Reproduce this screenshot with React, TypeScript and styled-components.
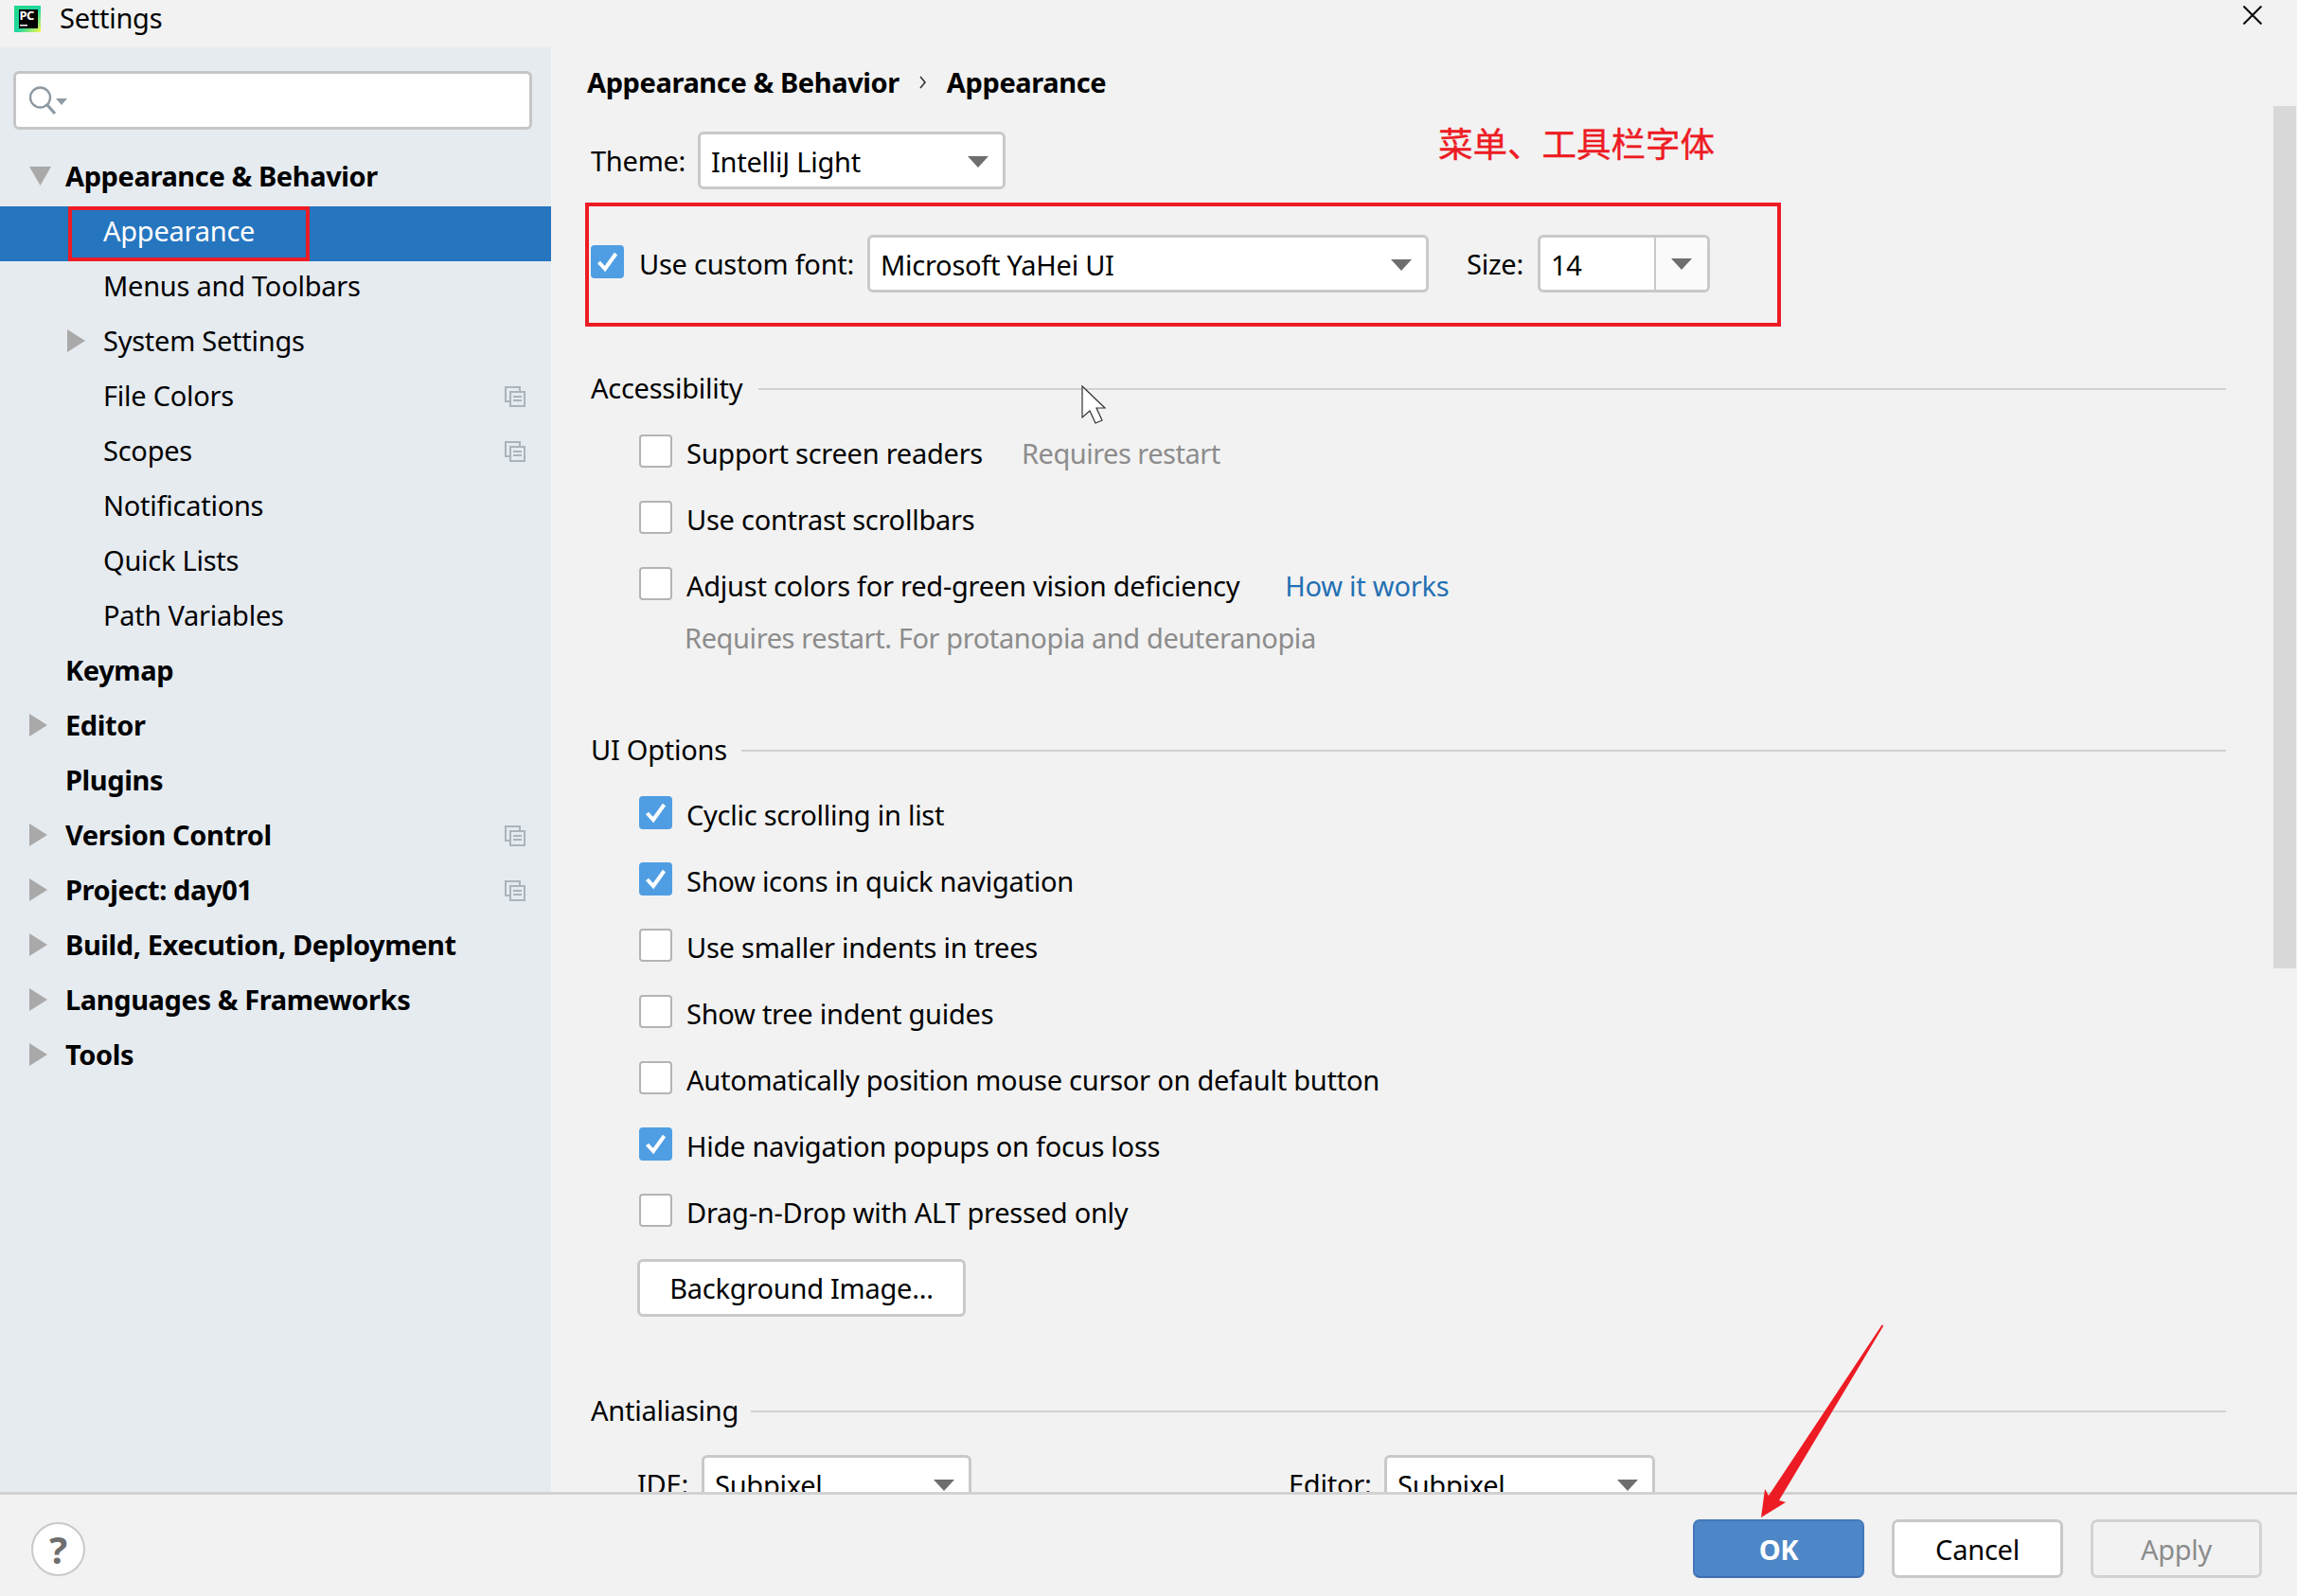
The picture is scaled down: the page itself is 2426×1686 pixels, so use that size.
import styled, { createGlobalStyle } from 'styled-components'

const GlobalStyle = createGlobalStyle`
    html, body {
        margin: 0;
        padding: 0;
        background: #f2f2f2;
    }
    * {
        box-sizing: border-box;
    }
`;

const FONT = `"Noto Sans", "Noto Sans CJK SC", sans-serif`;

const Window = styled.div`
    position: relative;
    width: 2426px;
    height: 1686px;
    display: flex;
    flex-direction: column;
    overflow: hidden;
    background: #f2f2f2;
    color: #000;
    font-family: ${FONT};
    font-size: 29px;
    letter-spacing: -0.25px;
`;

const TitleBar = styled.div`
    height: 50px;
    flex: none;
    display: flex;
    align-items: flex-start;
    padding: 6px 37px 0 15px;
    gap: 20px;
`;

const TitleText = styled.span`
    line-height: 26px;
    font-size: 29px;
    flex: 1;
`;

const Main = styled.div`
    flex: 1;
    min-height: 0;
    display: flex;
`;

const Sidebar = styled.nav`
    width: 582px;
    flex: none;
    background: #e6ebf0;
    padding-top: 25px;
`;

const SearchBox = styled.div`
    width: 548px;
    height: 62px;
    margin-left: 14px;
    margin-bottom: 23px;
    background: #fff;
    border: 3px solid #c6c6c6;
    border-radius: 6px;
    display: flex;
    align-items: center;
    padding-left: 14px;
`;

const NavRow = styled.div<{ $selected?: boolean }>`
    position: relative;
    height: 58px;
    display: flex;
    align-items: center;
    padding-bottom: 7px;
    background: ${p => (p.$selected ? '#2675bf' : 'transparent')};
    color: ${p => (p.$selected ? '#fff' : '#000')};
`;

const ArrowSlot = styled.span<{ $left: number }>`
    position: absolute;
    left: ${p => p.$left}px;
    display: flex;
    top: 0;
    bottom: 6px;
    align-items: center;
`;

const NavLabel = styled.span<{ $sub?: boolean }>`
    margin-left: ${p => (p.$sub ? 109 : 69)}px;
    font-weight: ${p => (p.$sub ? 400 : 700)};
    letter-spacing: ${p => (p.$sub ? -0.25 : -0.4)}px;
`;

const CopyIcon = styled.svg`
    position: absolute;
    left: 533px;
    top: 16px;
`;

const HighlightBox = styled.span`
    position: absolute;
    left: 72px;
    top: 0;
    width: 255px;
    height: 58px;
    border: 4px solid #ed1c24;
`;

const Content = styled.div`
    flex: 1;
    min-width: 0;
    overflow: hidden;
    padding-left: 42px;
`;

const Breadcrumb = styled.div`
    height: 76px;
    margin-left: -4px;
    padding-bottom: 3px;
    display: flex;
    align-items: center;
    font-weight: 700;
    gap: 21px;
    letter-spacing: -0.4px;
`;

const ThemeRow = styled.div`
    height: 61px;
    margin-top: 13px;
    display: flex;
    align-items: center;
`;

const FieldLabel = styled.span<{ $width: number; $left?: number }>`
    width: ${p => p.$width}px;
    flex: none;
    margin-left: ${p => p.$left ?? 0}px;
    white-space: nowrap;
`;

const Combo = styled.div<{ $width: number }>`
    width: ${p => p.$width}px;
    height: 61px;
    flex: none;
    background: #fff;
    border: 3px solid #c9c9c9;
    border-radius: 6px;
    display: flex;
    align-items: center;
    justify-content: space-between;
    padding: 2px 15px 0 11px;
`;

const Caret = styled.span`
    width: 0;
    height: 0;
    border-left: 11px solid transparent;
    border-right: 11px solid transparent;
    border-top: 12px solid #6e6e6e;
`;

const Annotation = styled.span`
    margin-left: 457px;
    margin-top: -36px;
    font-size: 36.5px;
    line-height: 36px;
    letter-spacing: 0;
    -webkit-text-stroke: 0.4px #ed1c24;
    color: #ed1c24;
    white-space: nowrap;
`;

const RedBox = styled.div`
    width: 1263px;
    height: 131px;
    margin: 14px 0 0 -6px;
    padding: 0 0 2px 2px;
    border: 4px solid #ed1c24;
    display: flex;
    align-items: center;
`;

const SplitCombo = styled.div`
    width: 182px;
    height: 61px;
    flex: none;
    background: #fff;
    border: 3px solid #c9c9c9;
    border-radius: 6px;
    display: flex;
    align-items: center;
`;

const SplitValue = styled.span`
    width: 120px;
    padding: 2px 0 0 11px;
`;

const SplitButton = styled.span`
    flex: 1;
    align-self: stretch;
    background: #fafafa;
    border-left: 2px solid #c9c9c9;
    border-radius: 0 4px 4px 0;
    display: flex;
    align-items: center;
    justify-content: center;
`;

const SectionTitle = styled.div<{ $top: number; $labelWidth: number }>`
    height: 50px;
    width: 1727px;
    margin-top: ${p => p.$top}px;
    margin-bottom: 10px;
    padding-bottom: 2px;
    display: grid;
    grid-template-columns: ${p => p.$labelWidth}px 1fr;
    align-items: center;
    white-space: nowrap;
    &::after {
        content: '';
        height: 2px;
        margin-top: 4px;
        background: #d2d2d2;
    }
`;

const CheckRow = styled.div`
    height: 70px;
    padding: 0 0 3px 51px;
    display: flex;
    align-items: center;
`;

const Box = styled.span<{ $checked?: boolean; $gap?: number }>`
    width: 35px;
    height: 35px;
    flex: none;
    margin-right: ${p => p.$gap ?? 15}px;
    margin-top: -4px;
    border-radius: 4px;
    background: ${p => (p.$checked ? '#4f9ee3' : '#fff')};
    border: ${p => (p.$checked ? 'none' : '2px solid #b4b4b4')};
    display: flex;
    align-items: center;
    justify-content: center;
`;

const Note = styled.span<{ $left: number }>`
    margin-left: ${p => p.$left}px;
    color: #8c8c8c;
    letter-spacing: -0.5px;
`;

const LinkText = styled.span`
    margin-left: 48px;
    color: #2470b3;
`;

const Hint = styled.div`
    height: 36px;
    padding-left: 99px;
    display: flex;
    align-items: center;
    color: #8c8c8c;
    letter-spacing: -0.4px;
`;

const PlainButton = styled.div`
    width: 347px;
    height: 61px;
    margin: 13px 0 0 49px;
    background: #fff;
    border: 3px solid #c9c9c9;
    border-radius: 6px;
    display: flex;
    align-items: center;
    justify-content: center;
`;

const AliasRow = styled.div`
    margin-top: 22px;
    padding-left: 49px;
    display: flex;
    align-items: center;
`;

const Scrollbar = styled.div`
    position: absolute;
    right: 1px;
    top: 112px;
    width: 24px;
    height: 911px;
    background: #d8d8d8;
`;

const Footer = styled.footer`
    height: 110px;
    flex: none;
    border-top: 3px solid #d2d2d2;
    background: #f2f2f2;
    display: flex;
    align-items: flex-start;
    padding: 26px 37px 0 33px;
`;

const HelpButton = styled.div`
    width: 57px;
    height: 57px;
    margin-top: 3px;
    border-radius: 50%;
    background: #fff;
    border: 2px solid #c9c9c9;
    color: #6e6e6e;
    font-weight: 700;
    font-size: 40px;
    display: flex;
    align-items: center;
    justify-content: center;
`;

const ButtonGroup = styled.div`
    margin-left: auto;
    display: flex;
    gap: 29px;
`;

const DialogButton = styled.div<{ $kind: 'primary' | 'normal' | 'disabled' }>`
    width: 181px;
    height: 62px;
    border-radius: 7px;
    display: flex;
    align-items: center;
    justify-content: center;
    background: ${p => (p.$kind === 'primary' ? '#4d87c7' : p.$kind === 'normal' ? '#fff' : '#f2f2f2')};
    border: ${p => (p.$kind === 'primary' ? '2px solid #4478ba' : p.$kind === 'normal' ? '3px solid #c9c9c9' : '3px solid #d2d2d2')};
    border-bottom-color: ${p => (p.$kind === 'primary' ? '#3b6db0' : undefined)};
    color: ${p => (p.$kind === 'primary' ? '#fff' : p.$kind === 'normal' ? '#000' : '#8c8c8c')};
    font-weight: ${p => (p.$kind === 'primary' ? 700 : 400)};
`;

const Overlay = styled.svg`
    position: absolute;
    left: 0;
    top: 0;
    pointer-events: none;
`;

type NavItem = {
    label: string
    sub?: boolean
    arrow?: 'open' | 'closed'
    copy?: boolean
    selected?: boolean
}

const navItems: Array<NavItem> = [
    { label: 'Appearance & Behavior', arrow: 'open' },
    { label: 'Appearance', sub: true, selected: true },
    { label: 'Menus and Toolbars', sub: true },
    { label: 'System Settings', sub: true, arrow: 'closed' },
    { label: 'File Colors', sub: true, copy: true },
    { label: 'Scopes', sub: true, copy: true },
    { label: 'Notifications', sub: true },
    { label: 'Quick Lists', sub: true },
    { label: 'Path Variables', sub: true },
    { label: 'Keymap' },
    { label: 'Editor', arrow: 'closed' },
    { label: 'Plugins' },
    { label: 'Version Control', arrow: 'closed', copy: true },
    { label: 'Project: day01', arrow: 'closed', copy: true },
    { label: 'Build, Execution, Deployment', arrow: 'closed' },
    { label: 'Languages & Frameworks', arrow: 'closed' },
    { label: 'Tools', arrow: 'closed' },
]

const uiOptions: Array<[string, boolean]> = [
    ['Cyclic scrolling in list', true],
    ['Show icons in quick navigation', true],
    ['Use smaller indents in trees', false],
    ['Show tree indent guides', false],
    ['Automatically position mouse cursor on default button', false],
    ['Hide navigation popups on focus loss', true],
    ['Drag-n-Drop with ALT pressed only', false],
]

const Logo = () => (
    <svg width="28" height="28" viewBox="0 0 28 28">
        <defs>
            <linearGradient id="pcFrame" x1="0" y1="0" x2="1" y2="1">
                <stop offset="0" stopColor="#21d789" />
                <stop offset="0.55" stopColor="#21d7a0" />
                <stop offset="1" stopColor="#fcf84a" />
            </linearGradient>
        </defs>
        <rect width="28" height="28" fill="url(#pcFrame)" />
        <rect x="5" y="4" width="20" height="20" fill="#000" />
        <text x="5.5" y="15" fontSize="13" fontWeight="700" letterSpacing="-0.5" fill="#fff" fontFamily="Noto Sans, sans-serif">PC</text>
        <rect x="6" y="20" width="8" height="1.5" fill="#fff" />
    </svg>
)

const CloseIcon = () => (
    <svg width="20" height="20" viewBox="0 0 20 20" stroke="#111" strokeWidth="2.2">
        <path d="M0.5 0.5 L19.5 19.5 M19.5 0.5 L0.5 19.5" />
    </svg>
)

const SearchIcon = () => (
    <svg width="42" height="32" viewBox="0 0 42 32">
        <circle cx="11.5" cy="13" r="10.5" fill="none" stroke="#8e9aa3" strokeWidth="2.4" />
        <path d="M19 21 L27 30" stroke="#8e9aa3" strokeWidth="3.2" />
        <path d="M28 14 L40 14 L34 21 Z" fill="#8e9aa3" />
    </svg>
)

const TreeArrow = ({ kind, left }: { kind: 'open' | 'closed', left: number }) => (
    <ArrowSlot $left={left}>
        {kind === 'open' ? (
            <svg width="23" height="20" viewBox="0 0 23 20"><path d="M0 0 H23 L11.5 20 Z" fill="#a9a9a9" /></svg>
        ) : (
            <svg width="19" height="24" viewBox="0 0 19 24"><path d="M0 0 L19 12 L0 24 Z" fill="#a9a9a9" /></svg>
        )}
    </ArrowSlot>
)

const Check = () => (
    <svg width="23" height="23" viewBox="0 0 23 23">
        <path d="M2.5 12 L9 19 L20.5 3" fill="none" stroke="#fff" strokeWidth="4" />
    </svg>
)

export default function App() {
    return (
        <Window>
            <GlobalStyle />
            <TitleBar>
                <Logo />
                <TitleText>Settings</TitleText>
                <CloseIcon />
            </TitleBar>
            <Main>
                <Sidebar>
                    <SearchBox><SearchIcon /></SearchBox>
                    {navItems.map(item => (
                        <NavRow key={item.label} $selected={item.selected}>
                            {item.arrow && <TreeArrow kind={item.arrow} left={item.sub ? 71 : 31} />}
                            <NavLabel $sub={item.sub}>{item.label}</NavLabel>
                            {item.selected && <HighlightBox />}
                            {item.copy && (
                                <CopyIcon width="22" height="22" viewBox="0 0 22 22" fill="none" stroke="#aab4bb" strokeWidth="2">
                                    <path d="M5 16 H1 V1 H16 V5" />
                                    <rect x="6" y="6" width="15" height="15" />
                                    <path d="M9 11 H18 M9 15 H18" />
                                </CopyIcon>
                            )}
                        </NavRow>
                    ))}
                </Sidebar>
                <Content>
                    <Breadcrumb>
                        <span>Appearance &amp; Behavior</span>
                        <svg width="8" height="14" viewBox="0 0 8 14" fill="none" stroke="#333" strokeWidth="1.6"><path d="M1 1 L6 7 L1 13" /></svg>
                        <span>Appearance</span>
                    </Breadcrumb>
                    <ThemeRow>
                        <FieldLabel $width={113}>Theme:</FieldLabel>
                        <Combo $width={325}>IntelliJ Light<Caret /></Combo>
                        <Annotation>菜单、工具栏字体</Annotation>
                    </ThemeRow>
                    <RedBox>
                        <Box $checked $gap={16}><Check /></Box>
                        <FieldLabel $width={241}>Use custom font:</FieldLabel>
                        <Combo $width={593}>Microsoft YaHei UI<Caret /></Combo>
                        <FieldLabel $width={75} $left={40}>Size:</FieldLabel>
                        <SplitCombo>
                            <SplitValue>14</SplitValue>
                            <SplitButton><Caret /></SplitButton>
                        </SplitCombo>
                    </RedBox>

                    <SectionTitle $top={40} $labelWidth={177}>Accessibility</SectionTitle>
                    <CheckRow>
                        <Box />Support screen readers<Note $left={41}>Requires restart</Note>
                    </CheckRow>
                    <CheckRow><Box />Use contrast scrollbars</CheckRow>
                    <CheckRow>
                        <Box />Adjust colors for red-green vision deficiency<LinkText>How it works</LinkText>
                    </CheckRow>
                    <Hint>Requires restart. For protanopia and deuteranopia</Hint>

                    <SectionTitle $top={76} $labelWidth={159}>UI Options</SectionTitle>
                    {uiOptions.map(([label, checked]) => (
                        <CheckRow key={label}>
                            <Box $checked={checked}>{checked && <Check />}</Box>{label}
                        </CheckRow>
                    ))}
                    <PlainButton>Background Image...</PlainButton>

                    <SectionTitle $top={74} $labelWidth={169}>Antialiasing</SectionTitle>
                    <AliasRow>
                        <FieldLabel $width={68}>IDE:</FieldLabel>
                        <Combo $width={285}>Subpixel<Caret /></Combo>
                        <FieldLabel $width={101} $left={335}>Editor:</FieldLabel>
                        <Combo $width={286}>Subpixel<Caret /></Combo>
                    </AliasRow>
                </Content>
            </Main>
            <Footer>
                <HelpButton>?</HelpButton>
                <ButtonGroup>
                    <DialogButton $kind="primary">OK</DialogButton>
                    <DialogButton $kind="normal">Cancel</DialogButton>
                    <DialogButton $kind="disabled">Apply</DialogButton>
                </ButtonGroup>
            </Footer>
            <Scrollbar />
            <Overlay width="2426" height="1686" viewBox="0 0 2426 1686">
                <path d="M1143 408 V441 L1151 434 L1157 447 L1164 444 L1158 431 L1167 431 Z" fill="#fff" stroke="#333" strokeWidth="1.2" />
                <path d="M1988 1399 L1989 1401 L1879 1585 L1886 1587 L1860 1603 L1864 1573 L1868 1580 Z" fill="#ed1c24" />
            </Overlay>
        </Window>
    )
}
